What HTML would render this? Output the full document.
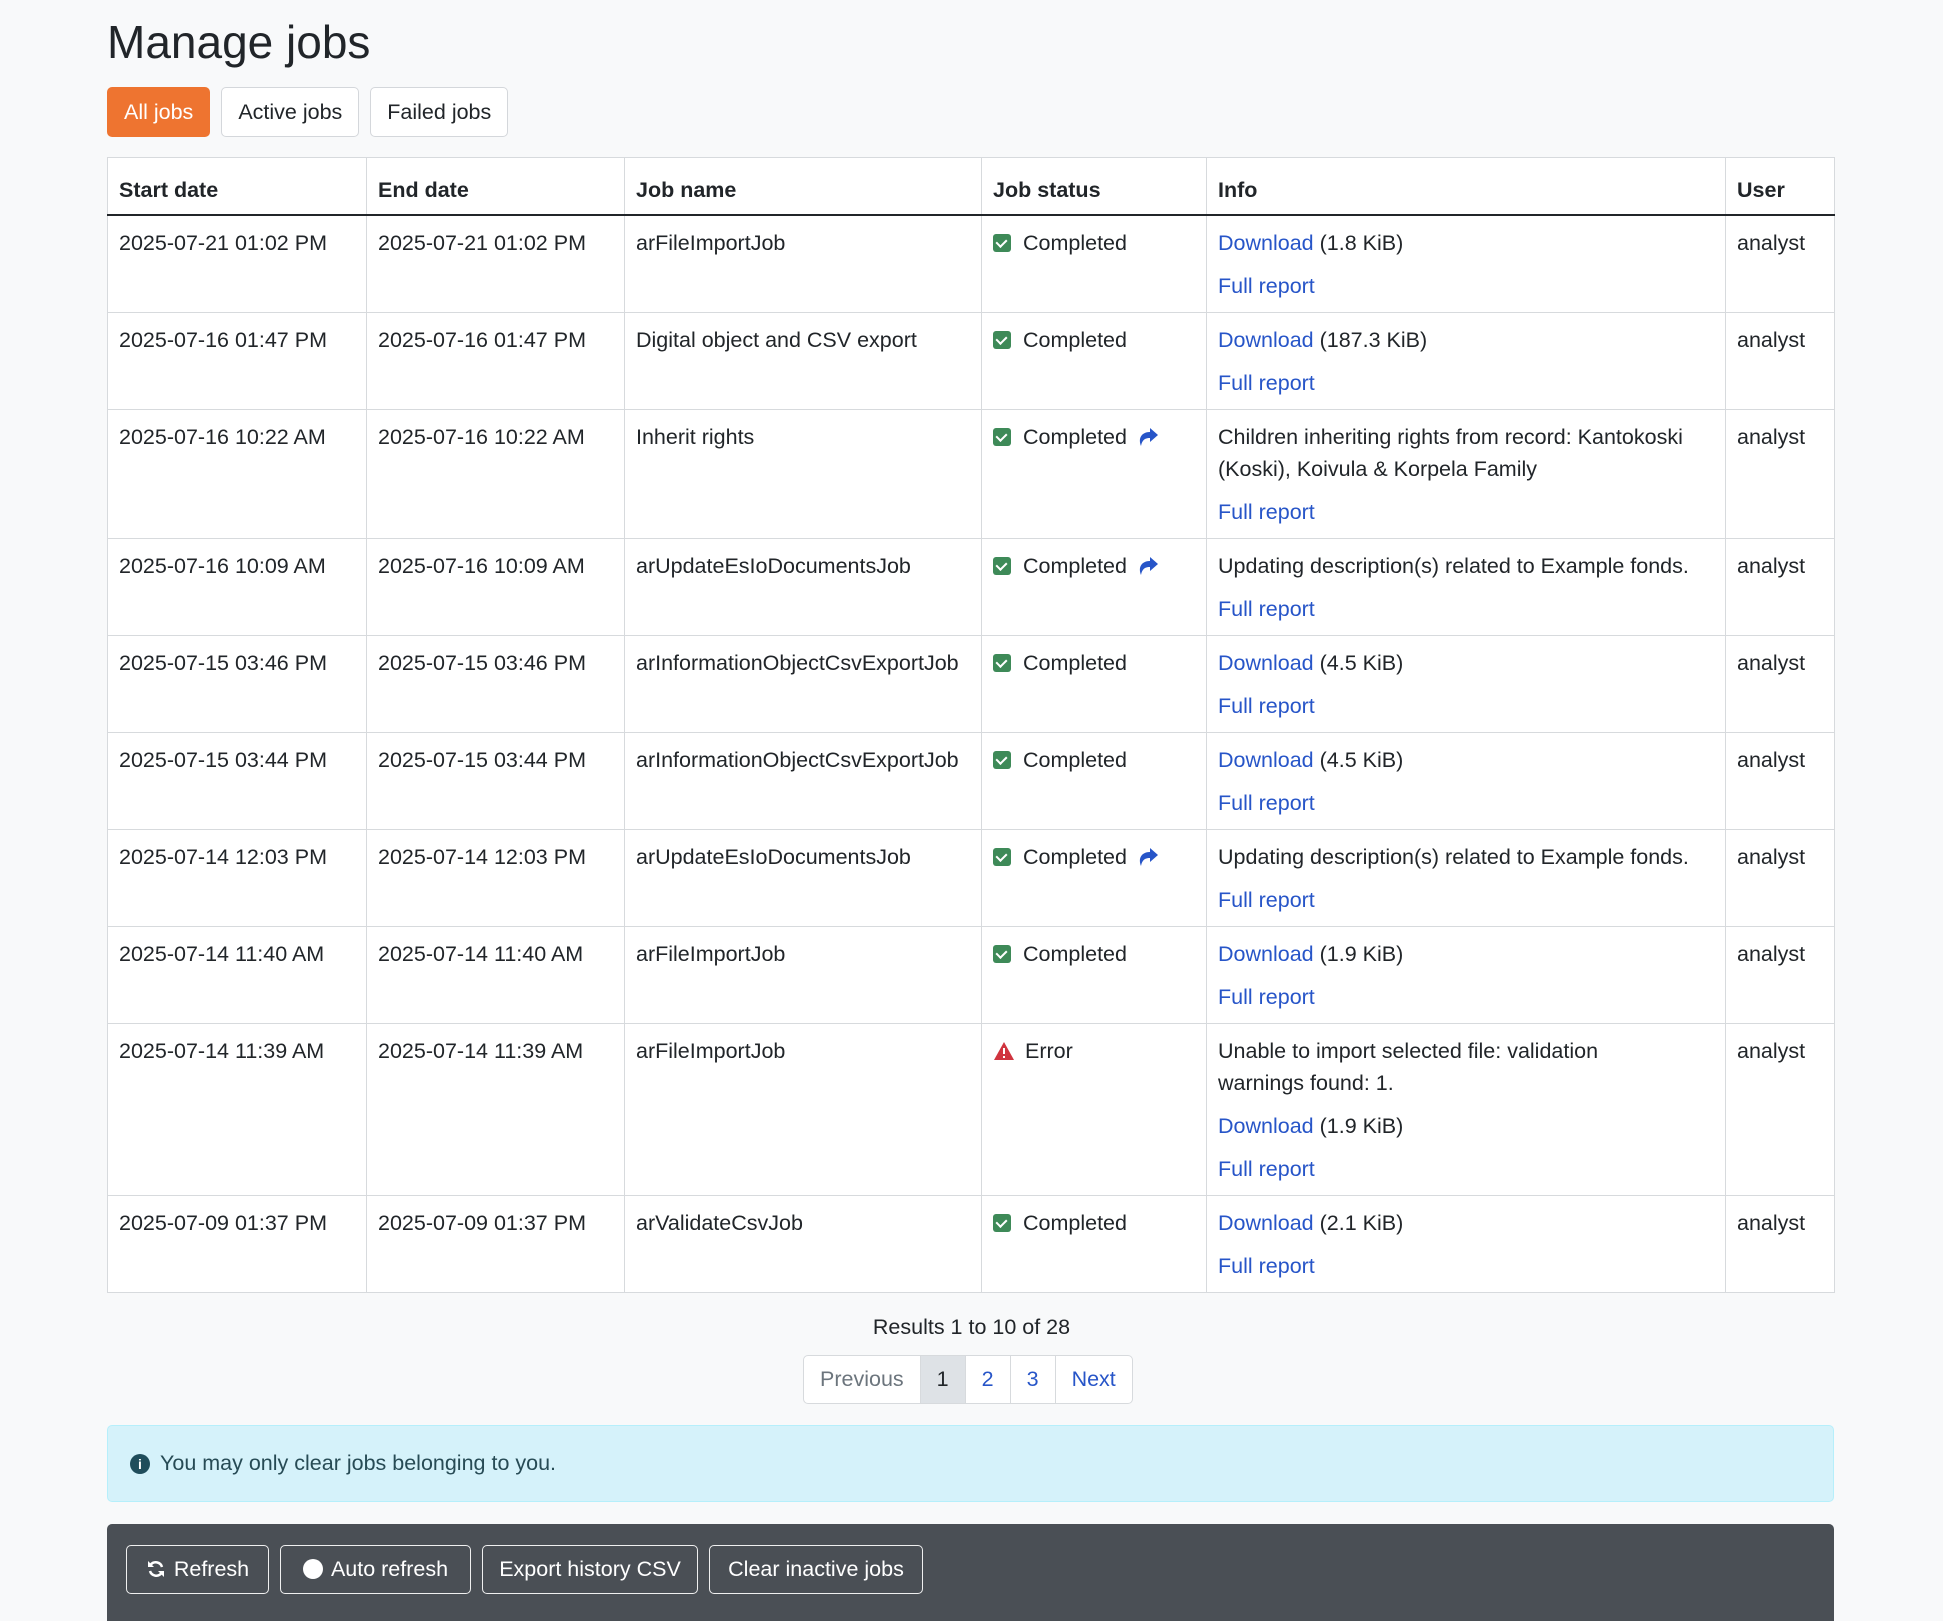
<!DOCTYPE html>
<html><head><meta charset="utf-8">
<style>
*{box-sizing:border-box}
body{margin:0;background:#f8f9fa;font-family:"Liberation Sans",sans-serif;color:#212529;font-size:21.5px;width:1943px;height:1621px;overflow:hidden}
h1{position:absolute;left:107px;top:12px;margin:0;font-weight:400;font-size:46px;line-height:60px}
.tabs{position:absolute;left:107px;top:87px;display:flex;gap:11px}
.tab{height:50px;border:1px solid #d4d7db;background:#fff;border-radius:5px;padding:0 16px;line-height:48px;font-size:21.5px}
.tab.on{background:#ee7430;border-color:#ee7430;color:#fff}
table{position:absolute;left:107px;top:157px;width:1727px;border-collapse:collapse;background:#fff;table-layout:fixed}
td,th{border:1px solid #d7dadd;vertical-align:top;padding:11px 11px 10px;line-height:32px;text-align:left}
th{height:57px;padding:16px 11px 6px;font-weight:700;border-bottom:2px solid #212529}
.l{margin-top:11px}
a{color:#2755c8;text-decoration:none}
.ck{display:inline-block;width:18px;height:18px;background:#3e8a58;border-radius:3px;vertical-align:-2px;margin-right:12px;position:relative}
.ck:after{content:"";position:absolute;left:5px;top:3px;width:5px;height:8px;border:solid #fff;border-width:0 2px 2px 0;transform:rotate(45deg)}
.sh{display:inline-block;vertical-align:-3px;margin-left:10px}
.res{position:absolute;left:0;width:1943px;top:1310px;text-align:center;line-height:34px}
.pg{position:absolute;left:803px;top:1355px;height:49px;display:flex;border:1px solid #d7dadd;border-radius:5px;background:#fff;overflow:hidden}
.pg div{padding:0 16px;line-height:47px;border-left:1px solid #d7dadd;color:#2755c8}
.pg div:first-child{border-left:0;color:#6c757d}
.pg .cur{background:#dee2e6;color:#212529}
.alert{position:absolute;left:107px;top:1425px;width:1727px;height:77px;background:#d5f2fa;border:1px solid #b6effb;border-radius:5px;line-height:75px;padding-left:52px;color:#274b55}
.alert i{position:absolute;left:22px;top:28px;width:20px;height:20px;border-radius:50%;background:#1f4d5b;color:#fff;font-style:normal;font-size:14px;line-height:20px;text-align:center;font-weight:700}
.bar{position:absolute;left:107px;top:1524px;width:1727px;height:97px;background:#4a4f55;border-radius:5px 5px 0 0}
.btn{position:absolute;top:21px;height:49px;border:1px solid #f0f0f0;border-radius:5px;color:#fff;line-height:47px;text-align:center;font-size:21.5px}
</style></head><body>
<h1>Manage jobs</h1>
<div class="tabs"><div class="tab on">All jobs</div><div class="tab">Active jobs</div><div class="tab">Failed jobs</div></div>
<table>
<colgroup><col style="width:259px"><col style="width:258px"><col style="width:357px"><col style="width:225px"><col style="width:519px"><col style="width:109px"></colgroup>
<tr><th>Start date</th><th>End date</th><th>Job name</th><th>Job status</th><th>Info</th><th>User</th></tr>
<tr><td>2025-07-21 01:02 PM</td><td>2025-07-21 01:02 PM</td><td>arFileImportJob</td><td><span class="ck"></span>Completed</td><td><a>Download</a> (1.8 KiB)<div class="l"><a>Full report</a></div></td><td>analyst</td></tr>
<tr><td>2025-07-16 01:47 PM</td><td>2025-07-16 01:47 PM</td><td>Digital object and CSV export</td><td><span class="ck"></span>Completed</td><td><a>Download</a> (187.3 KiB)<div class="l"><a>Full report</a></div></td><td>analyst</td></tr>
<tr><td>2025-07-16 10:22 AM</td><td>2025-07-16 10:22 AM</td><td>Inherit rights</td><td><span class="ck"></span>Completed<svg class="sh" width="22" height="20" viewBox="0 0 22 20"><path d="M13 1 L21 8 L13 15 V11 C8 11 5 13 4 19 C1 12 4 5 13 5 Z" fill="#2755c8"/></svg></td><td>Children inheriting rights from record: Kantokoski<br>(Koski), Koivula &amp; Korpela Family<div class="l"><a>Full report</a></div></td><td>analyst</td></tr>
<tr><td>2025-07-16 10:09 AM</td><td>2025-07-16 10:09 AM</td><td>arUpdateEsIoDocumentsJob</td><td><span class="ck"></span>Completed<svg class="sh" width="22" height="20" viewBox="0 0 22 20"><path d="M13 1 L21 8 L13 15 V11 C8 11 5 13 4 19 C1 12 4 5 13 5 Z" fill="#2755c8"/></svg></td><td>Updating description(s) related to Example fonds.<div class="l"><a>Full report</a></div></td><td>analyst</td></tr>
<tr><td>2025-07-15 03:46 PM</td><td>2025-07-15 03:46 PM</td><td>arInformationObjectCsvExportJob</td><td><span class="ck"></span>Completed</td><td><a>Download</a> (4.5 KiB)<div class="l"><a>Full report</a></div></td><td>analyst</td></tr>
<tr><td>2025-07-15 03:44 PM</td><td>2025-07-15 03:44 PM</td><td>arInformationObjectCsvExportJob</td><td><span class="ck"></span>Completed</td><td><a>Download</a> (4.5 KiB)<div class="l"><a>Full report</a></div></td><td>analyst</td></tr>
<tr><td>2025-07-14 12:03 PM</td><td>2025-07-14 12:03 PM</td><td>arUpdateEsIoDocumentsJob</td><td><span class="ck"></span>Completed<svg class="sh" width="22" height="20" viewBox="0 0 22 20"><path d="M13 1 L21 8 L13 15 V11 C8 11 5 13 4 19 C1 12 4 5 13 5 Z" fill="#2755c8"/></svg></td><td>Updating description(s) related to Example fonds.<div class="l"><a>Full report</a></div></td><td>analyst</td></tr>
<tr><td>2025-07-14 11:40 AM</td><td>2025-07-14 11:40 AM</td><td>arFileImportJob</td><td><span class="ck"></span>Completed</td><td><a>Download</a> (1.9 KiB)<div class="l"><a>Full report</a></div></td><td>analyst</td></tr>
<tr><td>2025-07-14 11:39 AM</td><td>2025-07-14 11:39 AM</td><td>arFileImportJob</td><td><svg width="22" height="20" viewBox="0 0 22 20" style="vertical-align:-3px;margin-right:10px"><path d="M11 1 L21 19 H1 Z" fill="#d0343f"/><rect x="10" y="7" width="2" height="6" fill="#fff"/><rect x="10" y="15" width="2" height="2" fill="#fff"/></svg>Error</td><td>Unable to import selected file: validation<br>warnings found: 1.<div class="l"><a>Download</a> (1.9 KiB)</div><div class="l"><a>Full report</a></div></td><td>analyst</td></tr>
<tr><td>2025-07-09 01:37 PM</td><td>2025-07-09 01:37 PM</td><td>arValidateCsvJob</td><td><span class="ck"></span>Completed</td><td><a>Download</a> (2.1 KiB)<div class="l"><a>Full report</a></div></td><td>analyst</td></tr>
</table>
<div class="res">Results 1 to 10 of 28</div>
<div class="pg"><div>Previous</div><div class="cur">1</div><div>2</div><div>3</div><div>Next</div></div>
<div class="alert"><i>i</i>You may only clear jobs belonging to you.</div>
<div class="bar">
<div class="btn" style="left:19px;width:143px"><svg width="20" height="20" viewBox="0 0 20 20" style="vertical-align:-3px;margin-right:8px"><path d="M16 8 A6.5 6.5 0 0 0 4.5 6" fill="none" stroke="#fff" stroke-width="2.5"/><path d="M2 2 V8 H8 Z" fill="#fff"/><path d="M4 12 A6.5 6.5 0 0 0 15.5 14" fill="none" stroke="#fff" stroke-width="2.5"/><path d="M18 18 V12 H12 Z" fill="#fff"/></svg>Refresh</div>
<div class="btn" style="left:173px;width:191px"><span style="display:inline-block;width:20px;height:20px;border-radius:50%;background:#fff;vertical-align:-3px;margin-right:8px"></span>Auto refresh</div>
<div class="btn" style="left:375px;width:216px">Export history CSV</div>
<div class="btn" style="left:602px;width:214px">Clear inactive jobs</div>
</div>
</body></html>
